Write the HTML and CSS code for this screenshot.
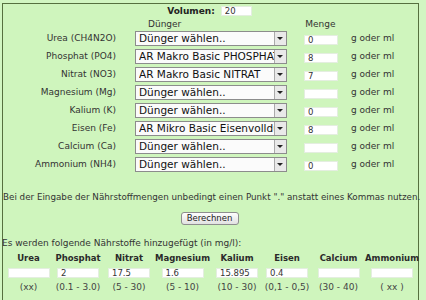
FILE: index.html
```html
<!DOCTYPE html>
<html lang="de">
<head>
    <meta charset="UTF-8">
    <title>Dünger Rechner</title>
    <link rel="stylesheet" href="styles.css">
</head>
<body>
    <div class="rechner">
        <div class="volumen">
            <label for="volumen">Volumen:</label>
            <input type="text" id="volumen" class="feld" value="20">
        </div>

        <div class="kopf">
            <span class="kopf-duenger">Dünger</span>
            <span class="kopf-menge">Menge</span>
        </div>

        <div class="zeile">
            <span class="stoff">Urea (CH4N2O)</span>
            <span class="auswahl"><select><option>Dünger wählen..</option></select></span>
            <input type="text" class="feld menge" value="0">
            <span class="einheit">g oder ml</span>
        </div>
        <div class="zeile">
            <span class="stoff">Phosphat (PO4)</span>
            <span class="auswahl"><select><option>AR Makro Basic PHOSPHAT</option></select></span>
            <input type="text" class="feld menge" value="8">
            <span class="einheit">g oder ml</span>
        </div>
        <div class="zeile">
            <span class="stoff">Nitrat (NO3)</span>
            <span class="auswahl"><select><option>AR Makro Basic NITRAT</option></select></span>
            <input type="text" class="feld menge" value="7">
            <span class="einheit">g oder ml</span>
        </div>
        <div class="zeile">
            <span class="stoff">Magnesium (Mg)</span>
            <span class="auswahl"><select><option>Dünger wählen..</option></select></span>
            <input type="text" class="feld menge" value="">
            <span class="einheit">g oder ml</span>
        </div>
        <div class="zeile">
            <span class="stoff">Kalium (K)</span>
            <span class="auswahl"><select><option>Dünger wählen..</option></select></span>
            <input type="text" class="feld menge" value="0">
            <span class="einheit">g oder ml</span>
        </div>
        <div class="zeile">
            <span class="stoff">Eisen (Fe)</span>
            <span class="auswahl"><select><option>AR Mikro Basic Eisenvolldünger</option></select></span>
            <input type="text" class="feld menge" value="8">
            <span class="einheit">g oder ml</span>
        </div>
        <div class="zeile">
            <span class="stoff">Calcium (Ca)</span>
            <span class="auswahl"><select><option>Dünger wählen..</option></select></span>
            <input type="text" class="feld menge" value="">
            <span class="einheit">g oder ml</span>
        </div>
        <div class="zeile">
            <span class="stoff">Ammonium (NH4)</span>
            <span class="auswahl"><select><option>Dünger wählen..</option></select></span>
            <input type="text" class="feld menge" value="0">
            <span class="einheit">g oder ml</span>
        </div>

        <p class="hinweis">Bei der Eingabe der Nährstoffmengen unbedingt einen Punkt "." anstatt eines Kommas nutzen.</p>

        <div class="aktion">
            <button type="button" class="knopf">Berechnen</button>
        </div>

        <p class="ergebnis-titel">Es werden folgende Nährstoffe hinzugefügt (in mg/l):</p>

        <div class="ergebnis">
            <span class="name">Urea</span>
            <span class="name">Phosphat</span>
            <span class="name">Nitrat</span>
            <span class="name">Magnesium</span>
            <span class="name">Kalium</span>
            <span class="name">Eisen</span>
            <span class="name">Calcium</span>
            <span class="name">Ammonium</span>

            <input type="text" class="feld wert" value="">
            <input type="text" class="feld wert" value="2">
            <input type="text" class="feld wert" value="17.5">
            <input type="text" class="feld wert" value="1.6">
            <input type="text" class="feld wert" value="15.895">
            <input type="text" class="feld wert" value="0.4">
            <input type="text" class="feld wert" value="">
            <input type="text" class="feld wert" value="">

            <span class="bereich">(xx)</span>
            <span class="bereich">(0.1 - 3.0)</span>
            <span class="bereich">(5 - 30)</span>
            <span class="bereich">(5 - 10)</span>
            <span class="bereich">(10 - 30)</span>
            <span class="bereich">(0,1 - 0,5)</span>
            <span class="bereich">(30 - 40)</span>
            <span class="bereich">( xx )</span>
        </div>
    </div>
</body>
</html>
```

FILE: styles.css
```css
body {
    margin: 0;
    padding: 0;
    background-color: #d2f6c2;
    font-family: "DejaVu Sans", Verdana, sans-serif;
    font-size: 9px;
    color: #333;
}
.rechner {
    width: 415px;
    height: 296px;
    margin: 3px 0 0 2px;
    border: 1px solid #56703f;
    border-bottom: none;
    background-color: #cff5bd;
}
.feld {
    box-sizing: border-box;
    height: 10px;
    padding: 0 0 0 3px;
    border: 1px solid #e4eee0;
    background-color: #fff;
    font-family: "DejaVu Sans", Verdana, sans-serif;
    font-size: 8.5px;
    line-height: 8px;
    color: #333;
    outline: none;
}
.volumen {
    height: 13px;
    display: flex;
    align-items: center;
    justify-content: center;
    gap: 6px;
    padding-right: 2px;
}
.volumen label {
    font-weight: bold;
    color: #222;
}
.volumen .feld {
    width: 31px;
}
.kopf {
    height: 13px;
    display: flex;
    align-items: center;
}
.kopf-duenger {
    margin-left: 145px;
}
.kopf-menge {
    margin-left: 124px;
}
.zeile {
    height: 18px;
    display: flex;
    align-items: flex-start;
}
.kopf + .zeile {
    margin-top: 1px;
}
.stoff {
    width: 113px;
    height: 15px;
    line-height: 15px;
    text-align: right;
    white-space: nowrap;
}
.auswahl {
    position: relative;
    width: 152px;
    height: 15px;
    margin-left: 19px;
}
.auswahl select {
    appearance: none;
    -webkit-appearance: none;
    box-sizing: border-box;
    width: 100%;
    height: 15px;
    margin: 0;
    padding: 0 0 0 3px;
    border: 1px solid #8c8c8c;
    border-radius: 0;
    background-color: #fbfbfb;
    font-family: "DejaVu Sans", Verdana, sans-serif;
    font-size: 10.5px;
    line-height: 13px;
    color: #111;
}
/* Pfeil-Knopf rechts im Auswahlfeld */
.auswahl::after {
    content: "";
    position: absolute;
    top: 1px;
    right: 1px;
    width: 12px;
    height: 13px;
    box-sizing: border-box;
    border-left: 1px solid #aaa;
    background-color: #e9e9e9;
}
.auswahl::before {
    content: "";
    position: absolute;
    z-index: 1;
    top: 6px;
    right: 4px;
    border-left: 3px solid transparent;
    border-right: 3px solid transparent;
    border-top: 3px solid #222;
}
.menge {
    width: 34px;
    margin: 4px 0 0 17px;
}
.einheit {
    height: 15px;
    line-height: 15px;
    margin-left: 13px;
    white-space: nowrap;
}
.hinweis {
    margin: 16px 0 0 0;
    font-size: 8.75px;
    line-height: 12px;
    white-space: nowrap;
}
.aktion {
    display: flex;
    justify-content: center;
    margin-top: 9px;
    padding-right: 2px;
}
.knopf {
    width: 58px;
    height: 13px;
    padding: 0;
    border: 1px solid #8e8e8e;
    border-radius: 3px;
    background: linear-gradient(#fdfdfd, #e2e2e2);
    font-family: "DejaVu Sans", Verdana, sans-serif;
    font-size: 8.5px;
    line-height: 11px;
    color: #222;
}
.ergebnis-titel {
    margin: 12px 0 0 -1px;
    line-height: 12px;
    white-space: nowrap;
}
.ergebnis {
    display: grid;
    grid-template-columns: 51px 48px 54px 53px 56px 44px 59px 48px;
    justify-items: center;
    align-items: center;
    margin-top: 3px;
}
.name {
    height: 12px;
    line-height: 12px;
    font-size: 8.5px;
    font-weight: bold;
    color: #2a2a2a;
    white-space: nowrap;
}
.wert {
    width: 42px;
    margin-top: 4px;
}
.bereich {
    margin-top: 3px;
    line-height: 12px;
    color: #444;
    white-space: nowrap;
}
```
